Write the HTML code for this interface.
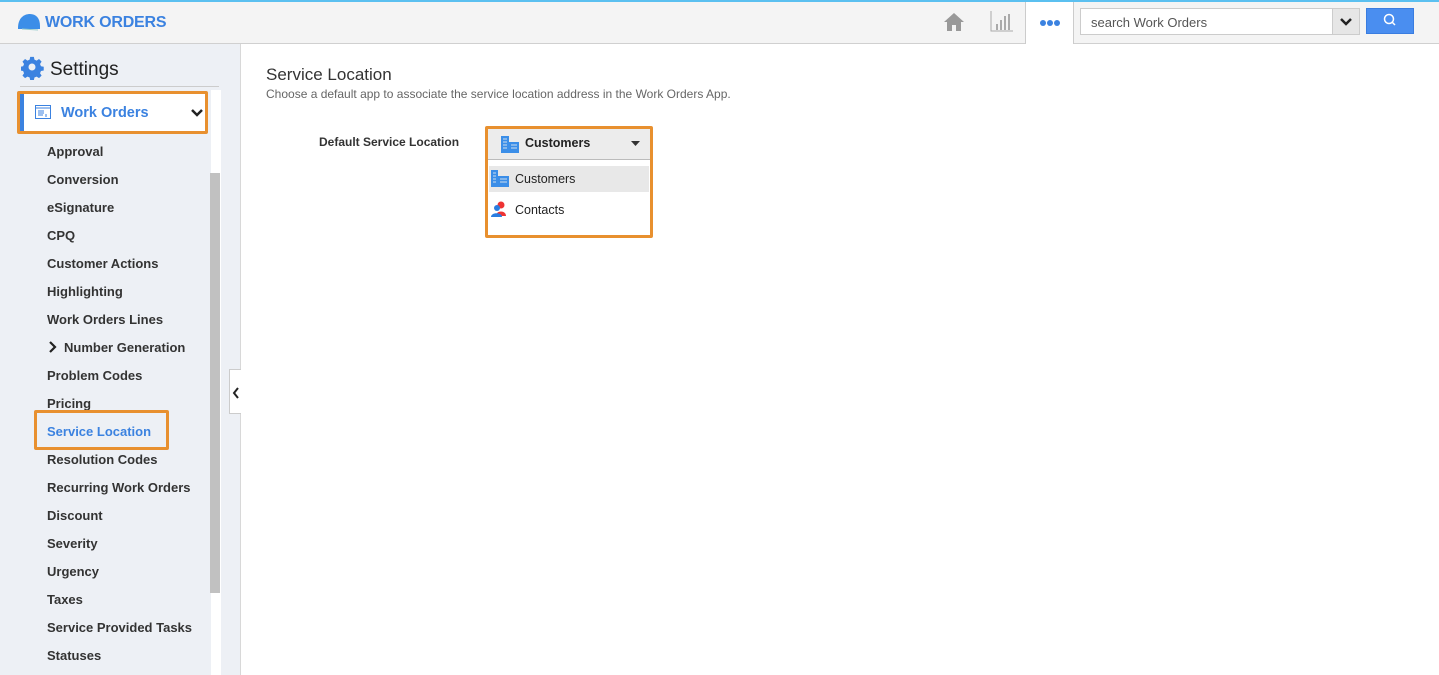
<!DOCTYPE html>
<html><head><style>
*{box-sizing:border-box;margin:0;padding:0}
body{width:1439px;height:675px;overflow:hidden;font-family:"Liberation Sans",Arial,sans-serif;background:#fff;position:relative}
.top{position:absolute;left:0;top:0;width:1439px;height:44px;background:#f4f4f4;border-top:2px solid #5bc0f0;border-bottom:1px solid #d0d0d0}
.logo{position:absolute;left:45px;top:12px;font-size:16px;font-weight:bold;color:#3b82e0;letter-spacing:-0.2px}
.side{position:absolute;left:0;top:44px;width:241px;height:631px;background:#edf0f5;border-right:1px solid #d8d8d8}
.item{position:absolute;left:47px;font-size:13px;font-weight:bold;color:#333}
.ob{position:absolute;border:3px solid #e8902f;border-radius:2px}
</style></head><body>
<div class="top">
<svg style="position:absolute;left:16px;top:10px" width="26" height="20" viewBox="0 0 26 20"><path d="M2 16 C2 6 8 2 14 2 C20 2 24 6 24 14 L24 17 L2 17Z" fill="#3b8ee8"/><path d="M6 17 L22 18" stroke="#9cc" stroke-width="1"/></svg>
<div class="logo">WORK ORDERS</div>
<svg style="position:absolute;left:943px;top:9px" width="22" height="22" viewBox="0 0 22 22"><path d="M11 2 L1 11 H4 V20 H9 V14 H13 V20 H18 V11 H21Z" fill="#999"/></svg>
<svg style="position:absolute;left:990px;top:8px" width="24" height="22" viewBox="0 0 24 22"><path d="M1 1 V21 H23" stroke="#aaa" fill="none"/><path d="M7 14V20M11 10V20M15 6V20M19 4V20" stroke="#aaa" stroke-width="2"/></svg>
<div style="position:absolute;left:1025px;top:0;width:49px;height:42px;background:#fff;border-left:1px solid #ccc;border-right:1px solid #ccc"></div>
<div style="position:absolute;left:1040px;top:18px;width:20px;height:6px">
<span style="position:absolute;left:0;width:6px;height:6px;border-radius:50%;background:#3b82e0"></span><span style="position:absolute;left:7px;width:6px;height:6px;border-radius:50%;background:#3b82e0"></span><span style="position:absolute;left:14px;width:6px;height:6px;border-radius:50%;background:#3b82e0"></span></div>
<div style="position:absolute;left:1080px;top:6px;width:280px;height:27px;background:#fff;border:1px solid #ccc;font-size:13px;color:#555;padding:6px 10px">search Work Orders</div>
<div style="position:absolute;left:1332px;top:6px;width:28px;height:27px;background:#e6e6e6;border:1px solid #ccc"><svg width="26" height="25" viewBox="0 0 26 25"><path d="M8 10 L13 15 L18 10" stroke="#222" stroke-width="2.5" fill="none"/></svg></div>
<div style="position:absolute;left:1366px;top:6px;width:48px;height:26px;background:#4a8ef0;border:1px solid #3a7de0"><svg width="46" height="24" viewBox="0 0 46 24"><circle cx="22" cy="10" r="4.5" stroke="#fff" stroke-width="1.5" fill="none"/><path d="M25 13 L28 16" stroke="#fff" stroke-width="1.5"/></svg></div>
</div>
<div class="side">
<svg style="position:absolute;left:21px;top:12px" width="24" height="24" viewBox="0 0 24 24"><path d="M10 1h4l.6 3 2.4 1 2.6-1.7 2.8 2.8L20.7 8.7l1 2.4 3 .6v4l-3 .6-1 2.4 1.7 2.6-2.8 2.8-2.6-1.7-2.4 1-.6 3h-4l-.6-3-2.4-1-2.6 1.7-2.8-2.8 1.7-2.6-1-2.4-3-.6v-4l3-.6 1-2.4L1.6 6.1 4.4 3.3 7 5l2.4-1z" transform="scale(.92)" fill="#3b82e0"/><circle cx="11" cy="11" r="3.5" fill="#edf0f5"/></svg>
<div style="position:absolute;left:50px;top:15px;font-size:19px;color:#222">Settings</div>
<div style="position:absolute;left:20px;top:42px;width:199px;border-top:1px solid #ccc"></div>
<div style="position:absolute;left:211px;top:46px;width:10px;height:585px;background:#fff"></div>
<div style="position:absolute;left:210px;top:129px;width:10px;height:420px;background:#c1c1c1"></div>
<div style="position:absolute;left:20px;top:49px;width:185px;height:39px;background:#fff;border-left:4px solid #3b82e0"></div>
<div class="ob" style="left:17px;top:47px;width:191px;height:43px"></div>
<svg style="position:absolute;left:35px;top:61px" width="16" height="14" viewBox="0 0 16 14"><rect x=".5" y=".5" width="15" height="13" fill="none" stroke="#3b82e0"/><path d="M1 3H15M3 6H9M3 8H9M3 10H8M11 9V12" stroke="#3b82e0"/></svg>
<div style="position:absolute;left:61px;top:61px;font-size:14.5px;font-weight:bold;color:#3b82e0;-webkit-text-stroke:0">Work Orders</div>
<svg style="position:absolute;left:191px;top:65px" width="12" height="8" viewBox="0 0 12 8"><path d="M1 1L6 6L11 1" stroke="#222" stroke-width="2.5" fill="none"/></svg>
<div class="item" style="top:100px">Approval</div>
<div class="item" style="top:128px">Conversion</div>
<div class="item" style="top:156px">eSignature</div>
<div class="item" style="top:184px">CPQ</div>
<div class="item" style="top:212px">Customer Actions</div>
<div class="item" style="top:240px">Highlighting</div>
<div class="item" style="top:268px">Work Orders Lines</div>
<svg style="position:absolute;left:48px;top:297px" width="9" height="12" viewBox="0 0 9 12"><path d="M2 1L7 6L2 11" stroke="#222" stroke-width="2.2" fill="none"/></svg>
<div class="item" style="top:296px;left:64px">Number Generation</div>
<div class="item" style="top:324px">Problem Codes</div>
<div class="item" style="top:352px">Pricing</div>
<div class="ob" style="left:34px;top:366px;width:135px;height:40px"></div>
<div class="item" style="top:380px;color:#3b82e0">Service Location</div>
<div class="item" style="top:408px">Resolution Codes</div>
<div class="item" style="top:436px">Recurring Work Orders</div>
<div class="item" style="top:464px">Discount</div>
<div class="item" style="top:492px">Severity</div>
<div class="item" style="top:520px">Urgency</div>
<div class="item" style="top:548px">Taxes</div>
<div class="item" style="top:576px">Service Provided Tasks</div>
<div class="item" style="top:604px">Statuses</div>
</div>
<div style="position:absolute;left:229px;top:369px;width:12px;height:45px;background:#fff;border:1px solid #ccc;border-right:none"><svg width="11" height="45" viewBox="0 0 11 45"><path d="M8 18L4 23L8 28" stroke="#222" stroke-width="2" fill="none"/></svg></div>
<div style="position:absolute;left:266px;top:65px;font-size:17px;color:#333">Service Location</div>
<div style="position:absolute;left:266px;top:87px;font-size:12px;color:#666">Choose a default app to associate the service location address in the Work Orders App.</div>
<div style="position:absolute;left:319px;top:135px;font-size:12px;font-weight:bold;color:#333">Default Service Location</div>
<div style="position:absolute;left:488px;top:129px;width:162px;height:31px;background:#ececec;border-bottom:1px solid #bbb"></div>
<div style="position:absolute;left:488px;top:161px;width:162px;height:74px;background:#fff"></div>
<div style="position:absolute;left:489px;top:166px;width:160px;height:26px;background:#e8e8e8"></div>
<svg style="position:absolute;left:500px;top:134px" width="20" height="19" viewBox="0 0 20 19"><path d="M1 2H9V19H1Z M9 8H19V19H9Z" fill="#3b8ee8"/><path d="M3 5H7M3 8H7M3 11H7M3 14H7M11 11H17M11 14H17" stroke="#cde" stroke-width="1"/></svg>
<div style="position:absolute;left:525px;top:136px;font-size:12.5px;font-weight:bold;color:#222">Customers</div>
<svg style="position:absolute;left:631px;top:141px" width="9" height="5"><path d="M0 0H9L4.5 5Z" fill="#333"/></svg>
<svg style="position:absolute;left:490px;top:169px" width="20" height="18" viewBox="0 0 20 18"><path d="M1 1H8V18H1Z M8 7H19V18H8Z" fill="#3b8ee8"/><path d="M3 4H6M3 7H6M3 10H6M3 13H6M10 10H17M10 13H17" stroke="#cde"/></svg>
<div style="position:absolute;left:515px;top:172px;font-size:12.5px;color:#222">Customers</div>
<svg style="position:absolute;left:490px;top:200px" width="18" height="17" viewBox="0 0 18 17"><circle cx="11" cy="5" r="3.5" fill="#e33"/><path d="M6 16 C6 10 16 10 16 16Z" fill="#e33"/><circle cx="7" cy="8" r="3" fill="#2a7de0"/><path d="M1 17 C1 12 12 12 12 17Z" fill="#2a7de0"/></svg>
<div style="position:absolute;left:515px;top:203px;font-size:12.5px;color:#222">Contacts</div>
<div class="ob" style="left:485px;top:126px;width:168px;height:112px"></div>
</body></html>
